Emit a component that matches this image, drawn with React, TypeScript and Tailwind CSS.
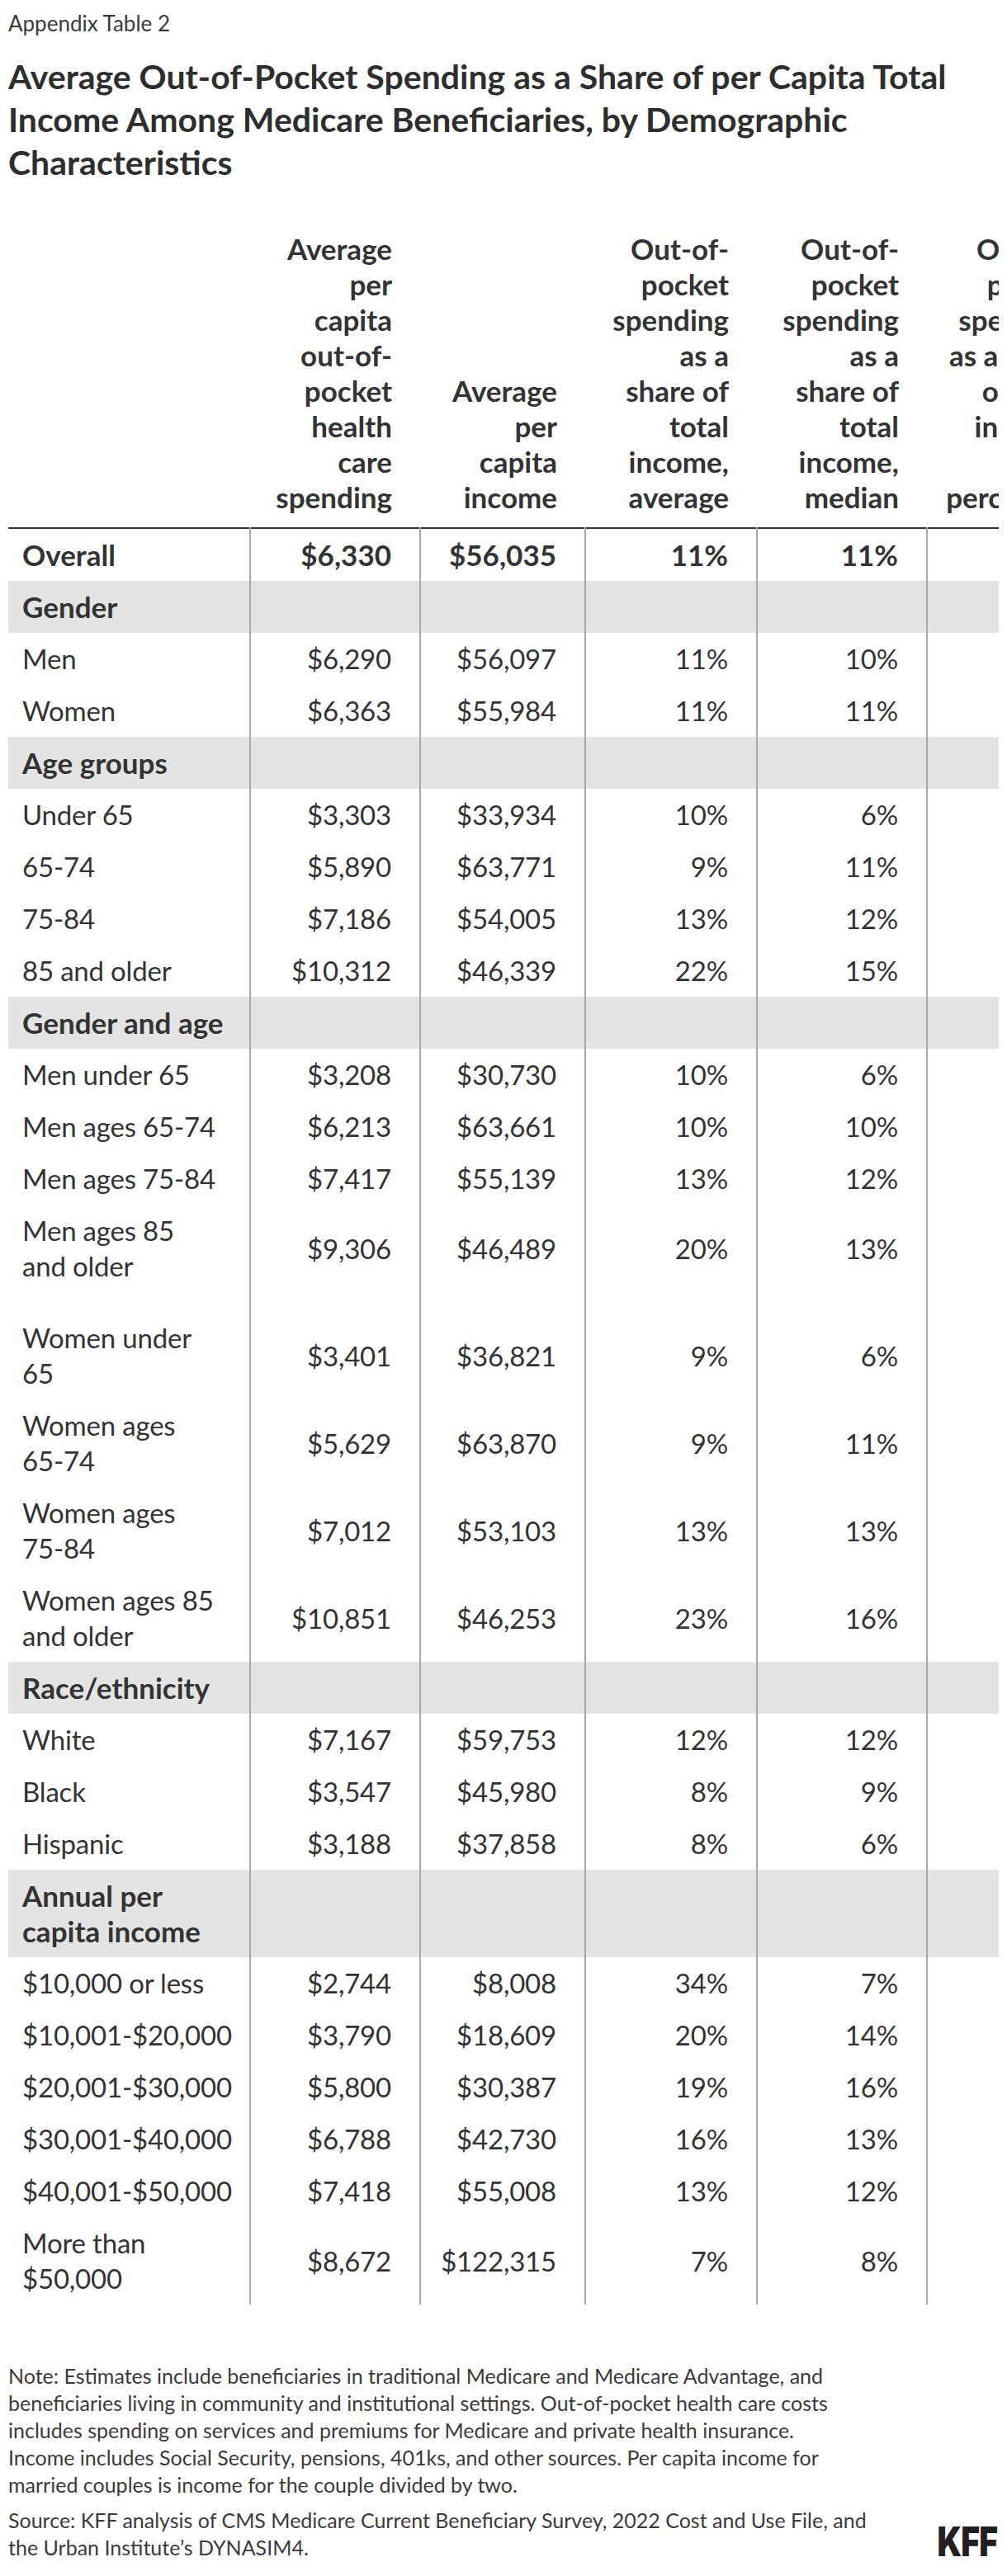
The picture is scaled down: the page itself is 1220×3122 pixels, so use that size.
import React from "react";

type Kind = "overall" | "cat" | "data";
type Row = { label: string[]; kind: Kind; v?: string[]; tall?: boolean };

const rows: Row[] = [
  { label: ["Overall"], kind: "overall", v: ["$6,330", "$56,035", "11%", "11%"] },
  { label: ["Gender"], kind: "cat" },
  { label: ["Men"], kind: "data", v: ["$6,290", "$56,097", "11%", "10%"] },
  { label: ["Women"], kind: "data", v: ["$6,363", "$55,984", "11%", "11%"] },
  { label: ["Age groups"], kind: "cat" },
  { label: ["Under 65"], kind: "data", v: ["$3,303", "$33,934", "10%", "6%"] },
  { label: ["65-74"], kind: "data", v: ["$5,890", "$63,771", "9%", "11%"] },
  { label: ["75-84"], kind: "data", v: ["$7,186", "$54,005", "13%", "12%"] },
  { label: ["85 and older"], kind: "data", v: ["$10,312", "$46,339", "22%", "15%"] },
  { label: ["Gender and age"], kind: "cat" },
  { label: ["Men under 65"], kind: "data", v: ["$3,208", "$30,730", "10%", "6%"] },
  { label: ["Men ages 65-74"], kind: "data", v: ["$6,213", "$63,661", "10%", "10%"] },
  { label: ["Men ages 75-84"], kind: "data", v: ["$7,417", "$55,139", "13%", "12%"] },
  { label: ["Men ages 85", "and older"], kind: "data", v: ["$9,306", "$46,489", "20%", "13%"], tall: true },
  { label: ["Women under", "65"], kind: "data", v: ["$3,401", "$36,821", "9%", "6%"] },
  { label: ["Women ages", "65-74"], kind: "data", v: ["$5,629", "$63,870", "9%", "11%"] },
  { label: ["Women ages", "75-84"], kind: "data", v: ["$7,012", "$53,103", "13%", "13%"] },
  { label: ["Women ages 85", "and older"], kind: "data", v: ["$10,851", "$46,253", "23%", "16%"] },
  { label: ["Race/ethnicity"], kind: "cat" },
  { label: ["White"], kind: "data", v: ["$7,167", "$59,753", "12%", "12%"] },
  { label: ["Black"], kind: "data", v: ["$3,547", "$45,980", "8%", "9%"] },
  { label: ["Hispanic"], kind: "data", v: ["$3,188", "$37,858", "8%", "6%"] },
  { label: ["Annual per", "capita income"], kind: "cat" },
  { label: ["$10,000 or less"], kind: "data", v: ["$2,744", "$8,008", "34%", "7%"] },
  { label: ["$10,001-$20,000"], kind: "data", v: ["$3,790", "$18,609", "20%", "14%"] },
  { label: ["$20,001-$30,000"], kind: "data", v: ["$5,800", "$30,387", "19%", "16%"] },
  { label: ["$30,001-$40,000"], kind: "data", v: ["$6,788", "$42,730", "16%", "13%"] },
  { label: ["$40,001-$50,000"], kind: "data", v: ["$7,418", "$55,008", "13%", "12%"] },
  { label: ["More than", "$50,000"], kind: "data", v: ["$8,672", "$122,315", "7%", "8%"] },
];

const headers: string[][] = [
  ["Average", "per", "capita", "out-of-", "pocket", "health", "care", "spending"],
  ["Average", "per", "capita", "income"],
  ["Out-of-", "pocket", "spending", "as a", "share of", "total", "income,", "average"],
  ["Out-of-", "pocket", "spending", "as a", "share of", "total", "income,", "median"],
  ["Out-of-", "pocket", "spending", "as a share", "of total", "income,", "90th", "percentile"],
];

function Lines({ lines }: { lines: string[] }) {
  return (
    <>
      {lines.map((l, i) => (
        <React.Fragment key={i}>
          {i > 0 && <br />}
          {l}
        </React.Fragment>
      ))}
    </>
  );
}

export default function App() {
  return (
    <div className="min-h-[3122px] w-[1220px] bg-white font-['Lato','Liberation_Sans',sans-serif] text-[#333]">
      <div className="px-[10px] pt-[12px]">
        <p className="text-[26px] leading-[32px] text-[#3a3a3a]">Appendix Table 2</p>
        <h1 className="mt-[23px] whitespace-nowrap text-[41px] font-bold leading-[52px] text-[#2e2e2e]">
          Average Out-of-Pocket Spending as a Share of per Capita Total
          <br />
          Income Among Medicare Beneficiaries, by Demographic
          <br />
          Characteristics
        </h1>
      </div>

      {/* table is wider than the page, right side is cut off */}
      <div className="ml-[10px] mt-[57px] w-[1200px] overflow-hidden">
        <table className="w-[1500px] table-fixed border-collapse leading-[43px]">
          <colgroup>
            <col className="w-[293px]" />
            <col className="w-[206px]" />
            <col className="w-[200px]" />
            <col className="w-[208px]" />
            <col className="w-[206px]" />
            <col className="w-[206px]" />
            <col />
          </colgroup>
          <thead>
            <tr className="border-b-2 border-[#333]">
              <th className="pb-[15px]" />
              {headers.map((h, i) => (
                <th
                  key={i}
                  className={`whitespace-nowrap pb-[15px] text-right align-bottom text-[35px] font-bold ${
                    i === 4 ? "pr-[27px]" : "pr-[34px]"
                  }`}
                >
                  <Lines lines={h} />
                </th>
              ))}
              <th />
            </tr>
          </thead>
          <tbody>
            {rows.map((r, i) => {
              const bold = r.kind !== "data";
              const txt = bold ? "text-[35px] font-bold" : "text-[33px] tracking-[-0.2px]";
              const bg = r.kind === "cat" ? "bg-[#e4e4e4]" : "";
              const py = r.tall ? "pt-[10px] pb-[34px]" : "py-[10px]";
              return (
                <tr key={i} className={bg}>
                  <td className={`whitespace-nowrap pl-[17px] align-middle ${py} ${txt}`}>
                    <Lines lines={r.label} />
                  </td>
                  {[0, 1, 2, 3].map((c) => (
                    <td
                      key={c}
                      className={`whitespace-nowrap border-l-2 border-[#a8a8a8] pr-[34px] text-right align-middle ${py} ${txt}`}
                    >
                      {r.v ? r.v[c] : ""}
                    </td>
                  ))}
                  <td className={`border-l-2 border-[#a8a8a8] ${py}`} />
                  <td className={py} />
                </tr>
              );
            })}
          </tbody>
        </table>
      </div>

      <div className="px-[10px] pt-[70px] text-[25px] leading-[33px] text-[#3a3a3a]">
        <p className="whitespace-nowrap">
          Note: Estimates include beneficiaries in traditional Medicare and Medicare Advantage, and
          <br />
          beneficiaries living in community and institutional settings. Out-of-pocket health care costs
          <br />
          includes spending on services and premiums for Medicare and private health insurance.
          <br />
          Income includes Social Security, pensions, 401ks, and other sources. Per capita income for
          <br />
          married couples is income for the couple divided by two.
        </p>
        <div className="mt-[10px] flex items-end justify-between">
          <p className="whitespace-nowrap">
            Source: KFF analysis of CMS Medicare Current Beneficiary Survey, 2022 Cost and Use File, and
            <br />
            the Urban Institute’s DYNASIM4.
          </p>
          <span className="mb-[4px] mr-[2px] inline-block origin-right scale-x-[0.78] font-['Inter',sans-serif] text-[50px] font-black leading-[40px] tracking-[-1px] text-[#231f20]">
            KFF
          </span>
        </div>
      </div>
    </div>
  );
}
